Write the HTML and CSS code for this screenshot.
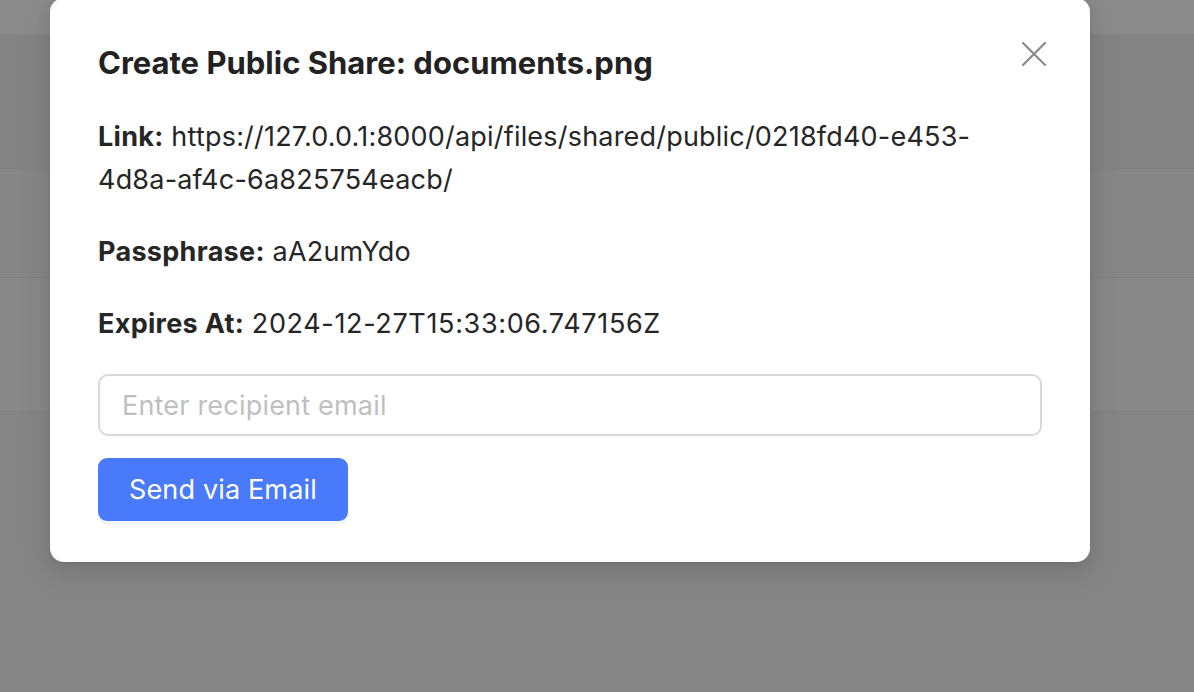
FILE: index.html
```html
<!DOCTYPE html>
<html lang="en">
<head>
<meta charset="utf-8">
<title>Create Public Share</title>
<link rel="stylesheet" href="styles.css">
</head>
<body>
<div class="page">
  <div class="band band-top"></div>
  <div class="band band-a"></div>
  <div class="band band-b"></div>
  <div class="band band-c"></div>
  <div class="band band-d"></div>
</div>
<div class="modal">
  <button class="close" aria-label="Close">
    <svg width="24" height="24" viewBox="0 0 24 24"><path d="M1 1 L23 23 M23 1 L1 23" stroke="#8a8a8a" stroke-width="2.2" fill="none" stroke-linecap="square"/></svg>
  </button>
  <h2 class="title">Create Public Share: documents.png</h2>
  <p class="field"><strong>Link:</strong> https://127.0.0.1:8000/api/files/shared/public/0218fd40-e453-<br>4d8a-af4c-6a825754eacb/</p>
  <p class="field"><strong>Passphrase:</strong> aA2umYdo</p>
  <p class="field"><strong>Expires At:</strong> <span class="num">2024-12-27T15:33:06.747156Z</span></p>
  <input class="email" type="email" placeholder="Enter recipient email">
  <button class="send">Send via Email</button>
</div>
</body>
</html>
```

FILE: styles.css
```css
* { box-sizing: border-box; }
html, body { margin: 0; padding: 0; }
body {
  width: 1194px;
  height: 692px;
  overflow: hidden;
  background: #858585;
  font-family: Inter, "Noto Sans", sans-serif;
  position: relative;
}
.page { display: flex; flex-direction: column; }
.band { width: 100%; }
.band-top { height: 34px; background: #8b8b8b; }
.band-a { height: 135px; background: #838383; border-bottom: 1px solid #7f7f7f; }
.band-b { height: 109px; background: #868686; border-bottom: 1px solid #7e7e7e; }
.band-c { height: 134px; background: #888888; border-bottom: 1px solid #808080; }
.band-d { height: 279px; background: #858585; }

.modal {
  position: absolute;
  left: 50px;
  top: -2px;
  width: 1040px;
  background: #fff;
  border-radius: 14px;
  padding: 46px 48px 41px;
  box-shadow: 0 6px 16px rgba(0,0,0,0.08), 0 3px 6px -4px rgba(0,0,0,0.12), 0 9px 28px 8px rgba(0,0,0,0.05);
  display: flex;
  flex-direction: column;
  align-items: flex-start;
  color: #262626;
}
.close {
  position: absolute;
  top: 44px;
  right: 44px;
  width: 24px;
  height: 24px;
  padding: 0;
  border: 0;
  background: none;
  display: flex;
}
.title {
  margin: 0 0 33px;
  font-size: 31px;
  line-height: 38px;
  font-weight: 700;
  color: #222;
}
.field {
  margin: 0 0 29px;
  font-size: 27px;
  line-height: 43px;
  letter-spacing: 0.2px;
  color: #262626;
}
.field strong { font-weight: 700; letter-spacing: 0.3px; }
.field .num { letter-spacing: 0.65px; }
.email {
  width: 100%;
  height: 62px;
  border: 2px solid #d9d9d9;
  border-radius: 10px;
  padding: 0 22px;
  font-family: inherit;
  font-size: 27px;
  letter-spacing: 0.2px;
  color: #262626;
  outline: none;
  margin: 0 0 22px;
}
.email::placeholder { color: #bfbfbf; }
.send {
  height: 63px;
  padding: 0 31px;
  border: 0;
  border-radius: 9px;
  background: #4a7afc;
  color: #fff;
  font-family: inherit;
  font-size: 27px;
  letter-spacing: 0.15px;
  box-shadow: 0 4px 0 rgba(5, 120, 255, 0.06);
}
```
